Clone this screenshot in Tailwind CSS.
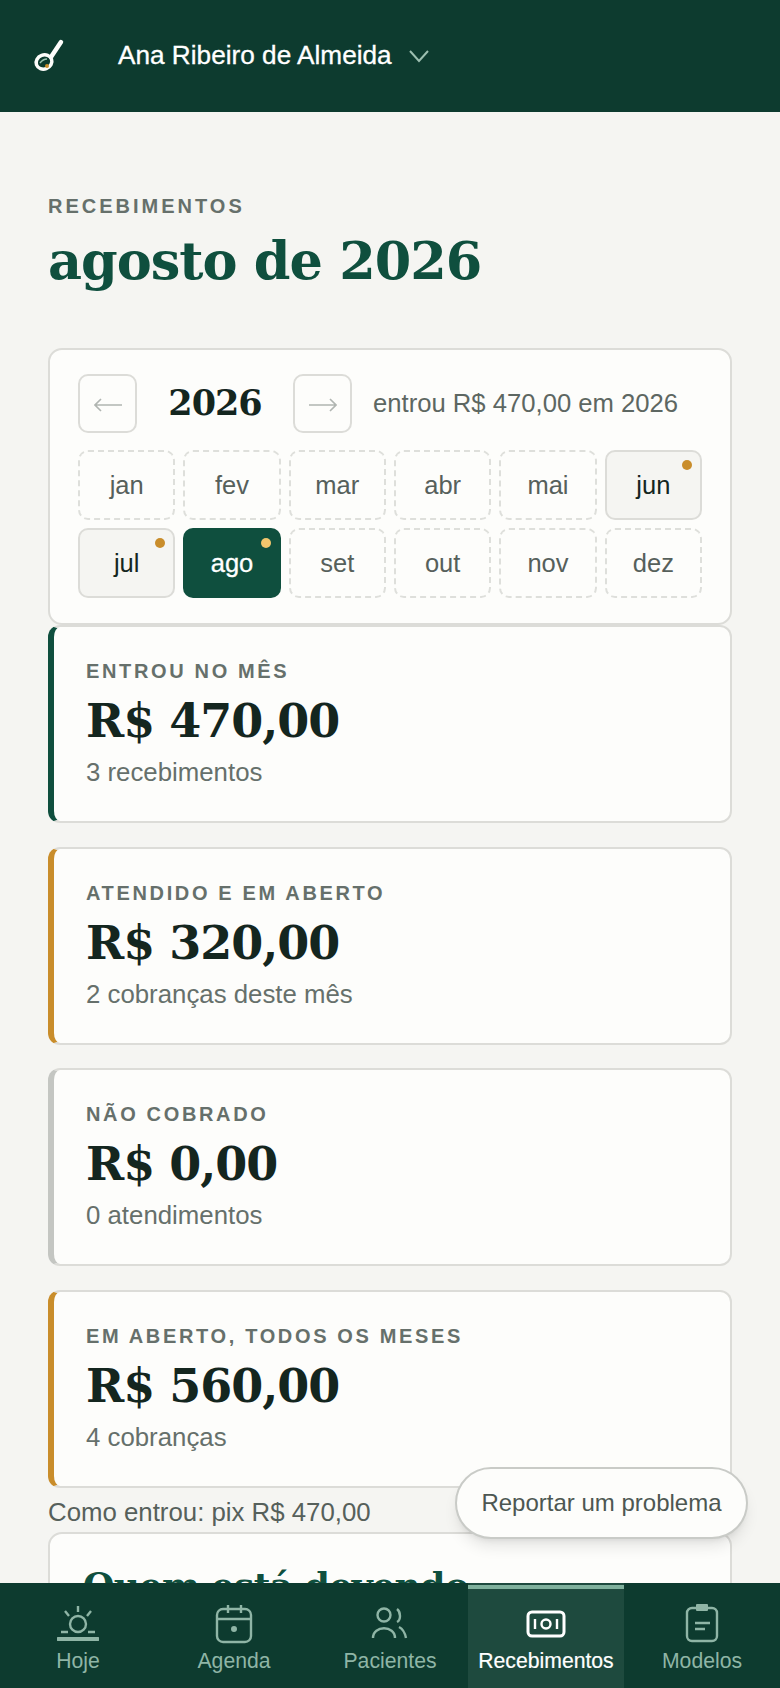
<!DOCTYPE html>
<html lang="pt-BR">
<head>
  <meta charset="UTF-8" />
  <meta name="viewport" content="width=device-width, initial-scale=1.0" />
  <title>Recebimentos</title>
  <script src="https://cdn.jsdelivr.net/npm/@tailwindcss/browser@4"></script>
</head>
<body class="relative h-[1688px] w-[780px] overflow-hidden bg-[#f5f5f2] font-['Liberation_Sans',sans-serif] text-[#56605b]">

  <!-- Header -->
  <header class="flex h-[112px] items-center bg-[#0d3b2f] pl-[33px]">
    <svg class="h-[42px] w-[34px]" viewBox="0 0 34 42" fill="none">
      <path d="M28 7 L18 22" stroke="#fdfdfb" stroke-width="4.5" stroke-linecap="round" />
      <ellipse cx="11" cy="27" rx="8" ry="7" transform="rotate(-20 11 27)" stroke="#fdfdfb" stroke-width="3.5" />
      <path d="M7 28 Q10 24 14 24" stroke="#9cc4b2" stroke-width="1.5" />
      <circle cx="14" cy="31" r="2" fill="#c98d2b" />
    </svg>
    <span class="ml-[51px] text-[26.2px] text-white [-webkit-text-stroke:0.3px_white]">Ana Ribeiro de Almeida</span>
    <svg class="ml-[16px] h-[14px] w-[22px]" viewBox="0 0 22 14" fill="none"><path d="M2 2 L11 12 L20 2" stroke="#9cbfb0" stroke-width="2" /></svg>
  </header>

  <main class="px-[48px]">
    <p class="mt-[82px] text-[20px] leading-[24px] font-bold tracking-[3px] text-[#66706b]">RECEBIMENTOS</p>
    <h1 class="mt-[9px] font-['DejaVu_Serif',serif] text-[52.5px] leading-[68px] font-bold tracking-[-1px] text-[#0f4f3e]">agosto de 2026</h1>

    <!-- Year card -->
    <section class="mt-[53px] h-[277px] rounded-[14px] border-2 border-[#dcdcd8] bg-[#fdfdfb] px-[28px] pt-[24px]">
      <div class="flex items-center">
        <button class="flex h-[59px] w-[59px] items-center justify-center rounded-[10px] border-2 border-[#dcdcd8]">
          <svg class="mt-[3px] h-[14px] w-[28px]" viewBox="0 0 28 14" fill="none" stroke="#b0b5b1" stroke-width="1.6"><path d="M1 7h27M7 1L1 7l6 6" /></svg>
        </button>
        <span class="w-[156px] text-center font-['DejaVu_Serif',serif] text-[35px] font-bold tracking-[-1px] text-[#14261f]">2026</span>
        <button class="flex h-[59px] w-[59px] items-center justify-center rounded-[10px] border-2 border-[#dcdcd8]">
          <svg class="mt-[3px] h-[14px] w-[28px]" viewBox="0 0 28 14" fill="none" stroke="#b0b5b1" stroke-width="1.6"><path d="M0 7h27M21 1l6 6-6 6" /></svg>
        </button>
        <span class="ml-[21px] text-[25.65px] text-[#5d6762]">entrou R$ 470,00 em 2026</span>
      </div>
      <div class="mt-[17px] grid grid-cols-6 gap-x-[8px] gap-y-[8px] text-[25.5px]">
        <span class="flex h-[70px] items-center justify-center rounded-[10px] border-2 border-dashed border-[#dedfdb]">jan</span>
        <span class="flex h-[70px] items-center justify-center rounded-[10px] border-2 border-dashed border-[#dedfdb]">fev</span>
        <span class="flex h-[70px] items-center justify-center rounded-[10px] border-2 border-dashed border-[#dedfdb]">mar</span>
        <span class="flex h-[70px] items-center justify-center rounded-[10px] border-2 border-dashed border-[#dedfdb]">abr</span>
        <span class="flex h-[70px] items-center justify-center rounded-[10px] border-2 border-dashed border-[#dedfdb]">mai</span>
        <span class="relative flex h-[70px] items-center justify-center rounded-[10px] border-2 border-[#dcdcd8] bg-[#f5f5f2] text-[#14261f]">jun<i class="absolute top-[8px] right-[8px] h-[10px] w-[10px] rounded-full bg-[#c98d2b]"></i></span>
        <span class="relative flex h-[70px] items-center justify-center rounded-[10px] border-2 border-[#dcdcd8] bg-[#f5f5f2] text-[#14261f]">jul<i class="absolute top-[8px] right-[8px] h-[10px] w-[10px] rounded-full bg-[#c98d2b]"></i></span>
        <span class="relative flex h-[70px] items-center justify-center rounded-[10px] bg-[#0f4f3e] text-white [-webkit-text-stroke:0.3px_white]">ago<i class="absolute top-[10px] right-[10px] h-[10px] w-[10px] rounded-full bg-[#f2c66d]"></i></span>
        <span class="flex h-[70px] items-center justify-center rounded-[10px] border-2 border-dashed border-[#dedfdb]">set</span>
        <span class="flex h-[70px] items-center justify-center rounded-[10px] border-2 border-dashed border-[#dedfdb]">out</span>
        <span class="flex h-[70px] items-center justify-center rounded-[10px] border-2 border-dashed border-[#dedfdb]">nov</span>
        <span class="flex h-[70px] items-center justify-center rounded-[10px] border-2 border-dashed border-[#dedfdb]">dez</span>
      </div>
    </section>

    <!-- Stat cards -->
    <div class="flex flex-col gap-[23.5px]">
      <article class="h-[198px] rounded-[12px] border-2 border-l-[6px] border-[#dcdcd8] border-l-[#0f4f3e] bg-[#fdfdfb] pt-[32px] pl-[32px]">
        <p class="text-[20px] leading-[24px] font-bold tracking-[2.65px] text-[#66706b]">ENTROU NO MÊS</p>
        <p class="mt-[7px] font-['DejaVu_Serif',serif] text-[46px] leading-[62px] font-bold tracking-[-1px] text-[#14261f]">R$ 470,00</p>
        <p class="mt-[4px] text-[25.8px] leading-[32px] text-[#66706b]">3 recebimentos</p>
      </article>
      <article class="h-[198px] rounded-[12px] border-2 border-l-[6px] border-[#dcdcd8] border-l-[#c98d2b] bg-[#fdfdfb] pt-[32px] pl-[32px]">
        <p class="text-[20px] leading-[24px] font-bold tracking-[2.65px] text-[#66706b]">ATENDIDO E EM ABERTO</p>
        <p class="mt-[7px] font-['DejaVu_Serif',serif] text-[46px] leading-[62px] font-bold tracking-[-1px] text-[#14261f]">R$ 320,00</p>
        <p class="mt-[4px] text-[25.8px] leading-[32px] text-[#66706b]">2 cobranças deste mês</p>
      </article>
      <article class="h-[198px] rounded-[12px] border-2 border-l-[6px] border-[#dcdcd8] border-l-[#c4c6c2] bg-[#fdfdfb] pt-[32px] pl-[32px]">
        <p class="text-[20px] leading-[24px] font-bold tracking-[2.65px] text-[#66706b]">NÃO COBRADO</p>
        <p class="mt-[7px] font-['DejaVu_Serif',serif] text-[46px] leading-[62px] font-bold tracking-[-1px] text-[#14261f]">R$ 0,00</p>
        <p class="mt-[4px] text-[25.8px] leading-[32px] text-[#66706b]">0 atendimentos</p>
      </article>
      <article class="h-[198px] rounded-[12px] border-2 border-l-[6px] border-[#dcdcd8] border-l-[#c98d2b] bg-[#fdfdfb] pt-[32px] pl-[32px]">
        <p class="text-[20px] leading-[24px] font-bold tracking-[2.65px] text-[#66706b]">EM ABERTO, TODOS OS MESES</p>
        <p class="mt-[7px] font-['DejaVu_Serif',serif] text-[46px] leading-[62px] font-bold tracking-[-1px] text-[#14261f]">R$ 560,00</p>
        <p class="mt-[4px] text-[25.8px] leading-[32px] text-[#66706b]">4 cobranças</p>
      </article>
    </div>

    <p class="mt-[8px] text-[25.8px] leading-[32px] text-[#56605b]">Como entrou: pix R$ 470,00</p>

    <section class="mt-[4px] h-[200px] rounded-[14px] border-2 border-[#dcdcd8] bg-[#fdfdfb] px-[33px] pt-[24px]">
      <h2 class="font-['DejaVu_Serif',serif] text-[36px] font-bold tracking-[-0.5px] text-[#0f4f3e]">Quem está devendo</h2>
    </section>
  </main>

  <!-- Report button -->
  <button class="absolute top-[1467px] left-[455px] h-[72px] w-[293px] rounded-full border-2 border-[#c9cbc7] bg-[#fdfdfb] text-[24px] text-[#4d5752] shadow-lg">Reportar um problema</button>

  <!-- Bottom nav -->
  <nav class="absolute right-0 bottom-0 left-0 grid h-[105px] grid-cols-5 bg-[#0d3b2f] text-[21.2px] text-[#8fb5a6]">
    <a class="flex flex-col items-center pt-[21px]">
      <svg class="h-[40px] w-[42px]" viewBox="0 0 42 40" fill="none" stroke="currentColor" stroke-width="2.4"><circle cx="21" cy="20" r="8" /><path d="M21 2v6M8 7l4 5M34 7l-4 5M4 28h7M31 28h7" /><path d="M1 35h40" stroke-width="4" stroke-linecap="round" /></svg>
      <span class="mt-[1px]">Hoje</span>
    </a>
    <a class="flex flex-col items-center pt-[21px]">
      <svg class="h-[40px] w-[38px]" viewBox="0 0 38 40" fill="none" stroke="currentColor" stroke-width="2.4"><rect x="2" y="5" width="34" height="33" rx="6" /><path d="M2 15h34M13 1v8M26 1v8" /><circle cx="19" cy="25" r="1.8" fill="currentColor" /></svg>
      <span class="mt-[1px]">Agenda</span>
    </a>
    <a class="flex flex-col items-center pt-[21px]">
      <svg class="h-[40px] w-[38px]" viewBox="0 0 38 40" fill="none" stroke="currentColor" stroke-width="2.4"><circle cx="13" cy="11" r="6.5" /><path d="M2 34c0-13 22-13 22 0M26 5c4 3 4 11 0 13M28 23c4 2 6 6 7 11" /></svg>
      <span class="mt-[1px]">Pacientes</span>
    </a>
    <a class="relative flex flex-col items-center bg-[#1e4a3e] pt-[21px] text-white">
      <i class="absolute top-[2px] right-0 left-0 h-[4px] bg-[#7fb09c]"></i>
      <svg class="h-[40px] w-[40px]" viewBox="0 0 40 40" fill="none" stroke="currentColor" stroke-width="3"><rect x="2" y="8" width="36" height="24" rx="4" /><circle cx="20" cy="20" r="4.5" stroke-width="2.4" /><path d="M9 15v10M31 15v10" stroke-width="2.4" /></svg>
      <span class="mt-[1px] [-webkit-text-stroke:0.2px_white]">Recebimentos</span>
    </a>
    <a class="flex flex-col items-center pt-[21px]">
      <svg class="h-[40px] w-[34px]" viewBox="0 0 34 40" fill="none" stroke="currentColor" stroke-width="2.4"><rect x="2" y="4" width="30" height="33" rx="5" /><path d="M10 19h15M10 25h10" /><rect x="11" y="0" width="12" height="7" rx="1" fill="currentColor" stroke="none" /></svg>
      <span class="mt-[1px]">Modelos</span>
    </a>
  </nav>
</body>
</html>
